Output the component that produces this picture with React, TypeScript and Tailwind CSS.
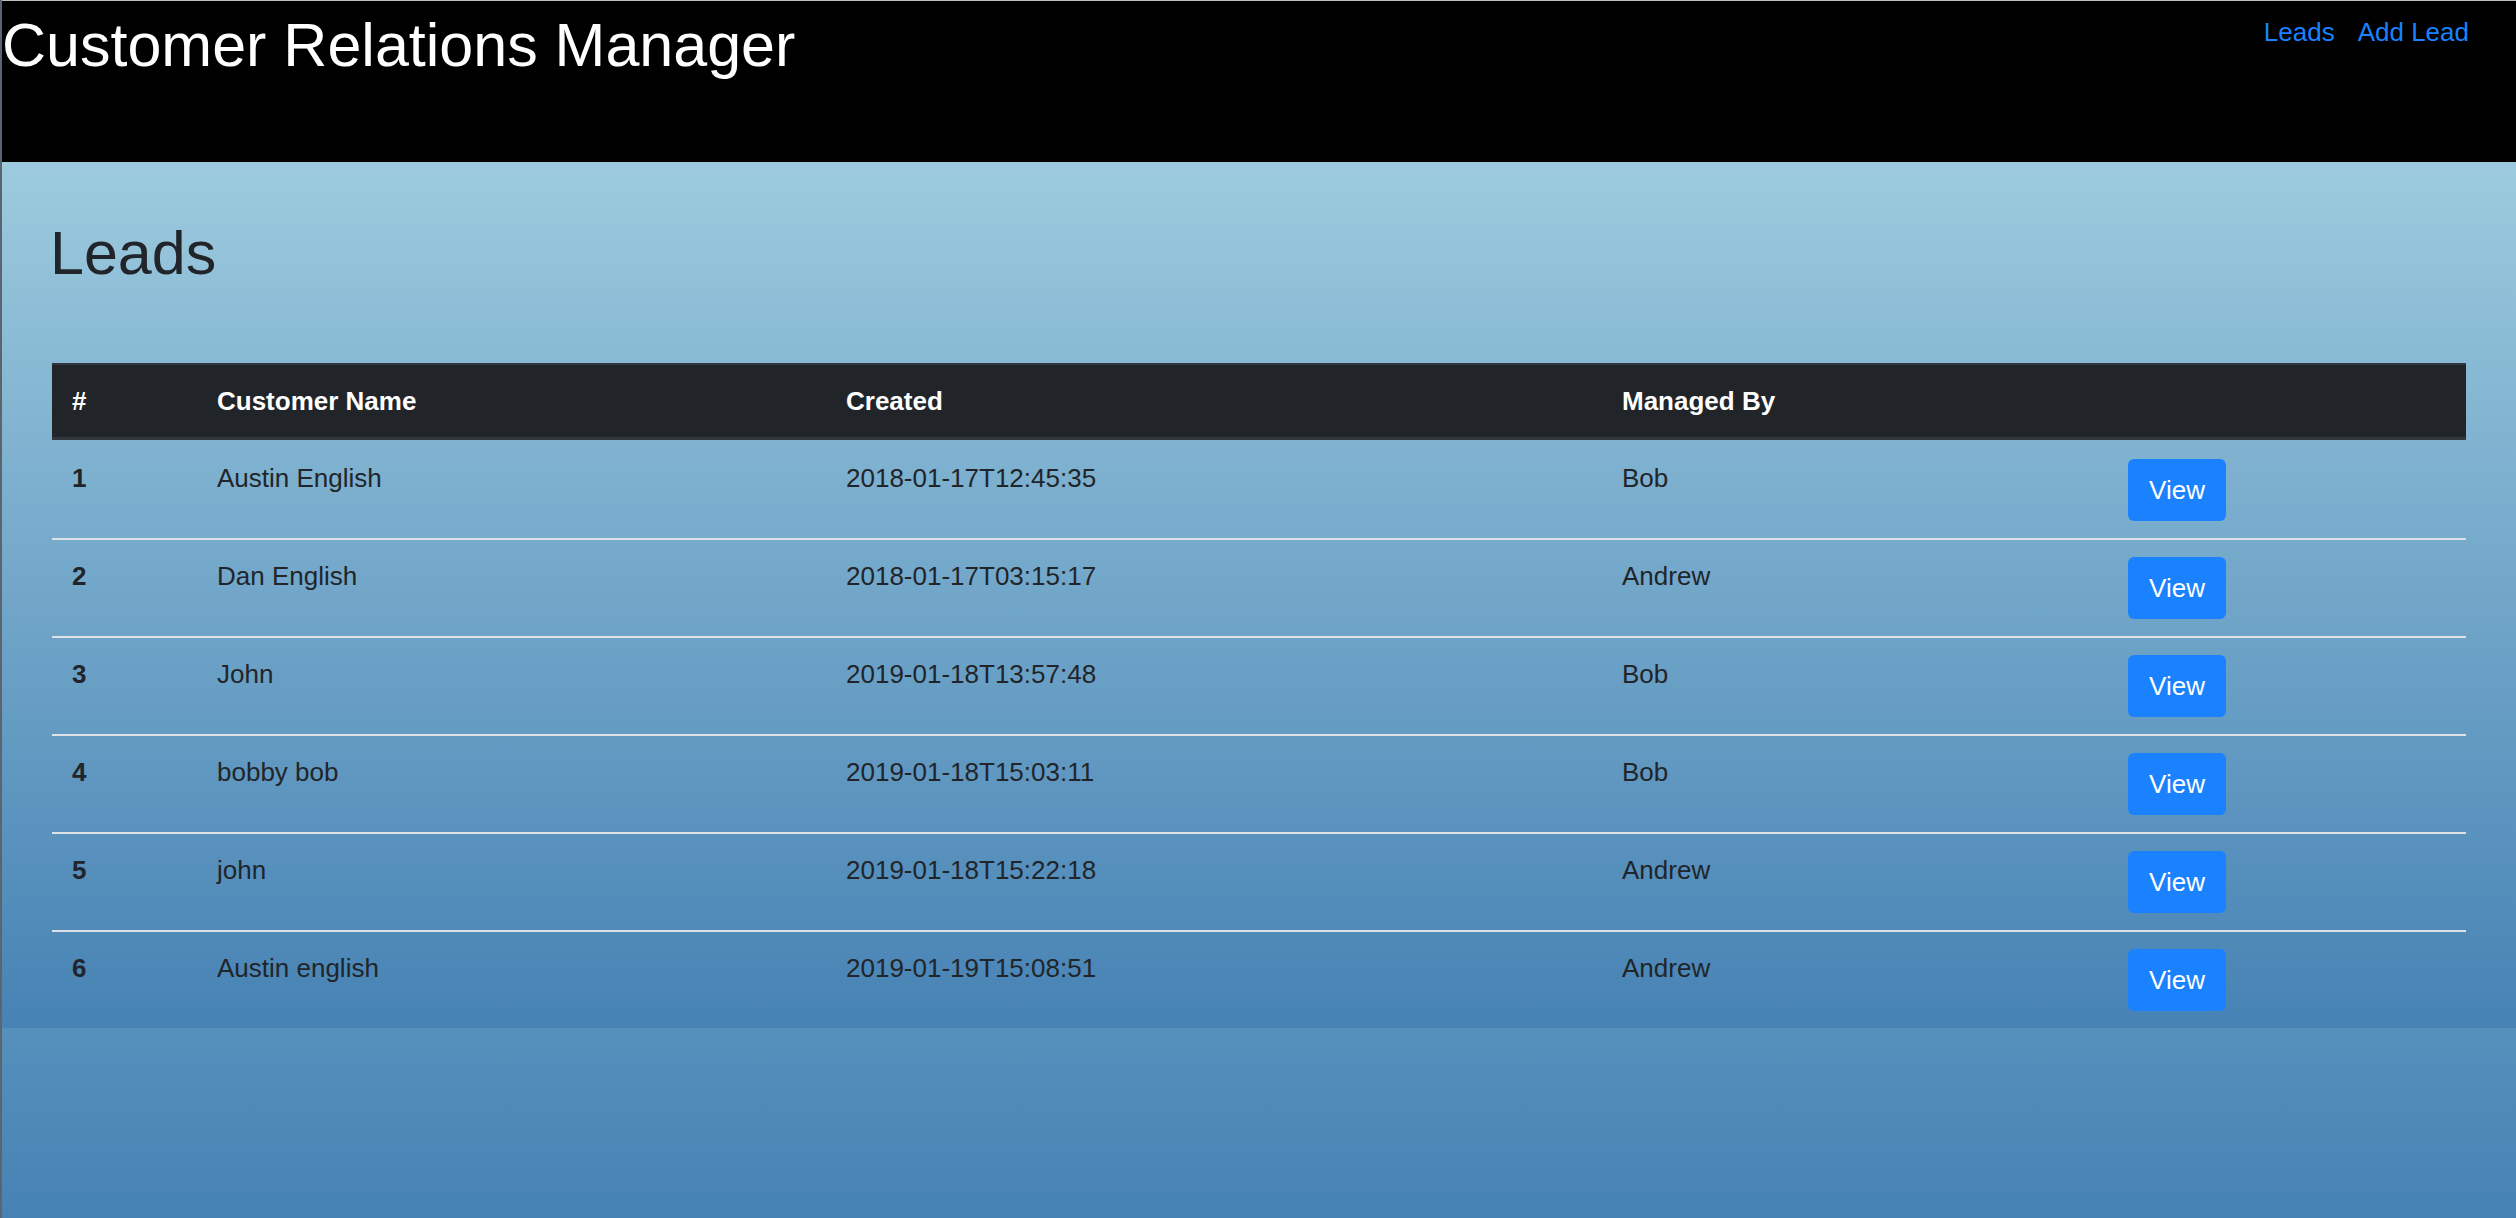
import React from "react";

const rows = [
  { id: 1, name: "Austin English", created: "2018-01-17T12:45:35", by: "Bob" },
  { id: 2, name: "Dan English", created: "2018-01-17T03:15:17", by: "Andrew" },
  { id: 3, name: "John", created: "2019-01-18T13:57:48", by: "Bob" },
  { id: 4, name: "bobby bob", created: "2019-01-18T15:03:11", by: "Bob" },
  { id: 5, name: "john", created: "2019-01-18T15:22:18", by: "Andrew" },
  { id: 6, name: "Austin english", created: "2019-01-19T15:08:51", by: "Andrew" },
];

export default function App() {
  return (
    <div className="relative min-h-screen bg-[linear-gradient(#add8e6,#4682b4)] font-['Liberation_Sans',Arial,sans-serif] text-[#212529]">
      <div className="bg-[linear-gradient(#add8e6,#4682b4)]">
        <header className="h-[162px] bg-black border-t border-[#bfbfbf] flex justify-between items-start">
          <h1 className="mt-[14px] ml-[2px] text-[61px] leading-[61px] text-white font-normal">
            Customer Relations Manager
          </h1>
          <nav className="mt-[12px] mr-[47px] flex gap-[23px] text-[26px] leading-[39px] text-[#1a82ff]">
            <a href="#">Leads</a>
            <a href="#">Add Lead</a>
          </nav>
        </header>
        <main className="pl-[52px] pr-[50px]">
          <h2 className="ml-[-2px] pt-[61px] text-[61px] leading-[61px] font-normal">Leads</h2>
          <div className="mt-[79px] text-[26px] leading-[39px]">
            <div className="flex h-[77px] bg-[#212529] border-t-2 border-b-[3px] border-[#32383e] text-white font-bold">
              <div className="w-[145px] px-[20px] pt-[17px]">#</div>
              <div className="w-[629px] px-[20px] pt-[17px]">Customer Name</div>
              <div className="w-[776px] px-[20px] pt-[17px]">Created</div>
              <div className="w-[506px] px-[20px] pt-[17px]">Managed By</div>
              <div className="flex-1 px-[20px] pt-[17px]"></div>
            </div>
            {rows.map((r, i) => (
              <div
                key={r.id}
                className={
                  i === 0
                    ? "flex h-[98px] pt-[19px]"
                    : "flex h-[98px] pt-[17px] border-t-2 border-[#dee2e6]"
                }
              >
                <div className="w-[145px] px-[20px] font-bold">{r.id}</div>
                <div className="w-[629px] px-[20px]">{r.name}</div>
                <div className="w-[776px] px-[20px]">{r.created}</div>
                <div className="w-[506px] px-[20px]">{r.by}</div>
                <div className="flex-1 px-[20px]">
                  <button className="h-[62px] w-[98px] rounded-[6px] bg-[#1a82ff] text-white text-[26px] leading-none flex items-center justify-center">
                    View
                  </button>
                </div>
              </div>
            ))}
          </div>
        </main>
      </div>
      <div className="absolute left-0 top-0 bottom-0 w-[2px] bg-[#5b6570]" />
    </div>
  );
}
